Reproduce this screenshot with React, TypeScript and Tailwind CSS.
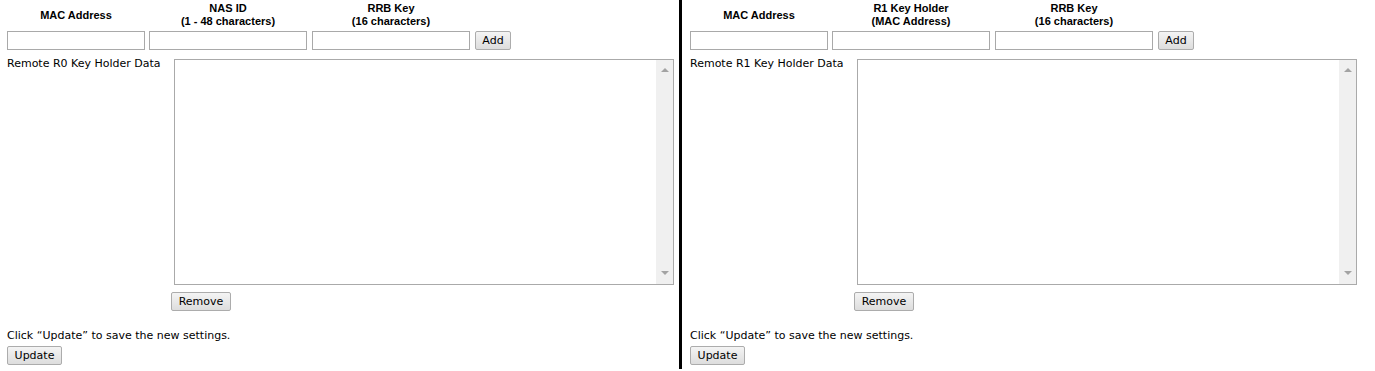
import React from "react";

const body = "font-['DejaVu_Sans',Verdana,sans-serif] text-[11px] text-black";
const head = "font-['Liberation_Sans',Arial,sans-serif] text-[11px] font-bold leading-[13px] text-black text-center";
const btn =
  "h-[19px] rounded-[2px] border border-[#acacac] bg-gradient-to-b from-[#f4f4f4] to-[#dddddd] font-['DejaVu_Sans',Verdana,sans-serif] text-[11px] leading-none text-black";
const input = "h-[19px] border border-[#a9a9a9] bg-white px-1 outline-none";

function Scrollbar() {
  return (
    <div className="flex w-[17px] flex-col items-center justify-between bg-[#f0f0f0] pt-[8px] pb-[9px]">
      <div className="h-0 w-0 border-x-[4px] border-b-[4px] border-x-transparent border-b-[#a3a3a3]" />
      <div className="h-0 w-0 border-x-[4px] border-t-[4px] border-x-transparent border-t-[#a3a3a3]" />
    </div>
  );
}

function Panel({ col2, label, right }: { col2: [string, string]; label: string; right?: boolean }) {
  return (
    <div className={right ? "flex flex-1 flex-col pl-[8px]" : "flex w-[679px] flex-col pl-[7px]"}>
      <div className="flex pt-[2px]">
        <div className={`flex h-[26px] w-[138px] items-center justify-center ${head}`}>MAC Address</div>
        <div className={`ml-[4px] flex h-[26px] w-[158px] flex-col items-center justify-center ${head}`}>
          <span>{col2[0]}</span>
          <span>{col2[1]}</span>
        </div>
        <div className={`ml-[5px] flex h-[26px] w-[158px] flex-col items-center justify-center ${head}`}>
          <span>RRB Key</span>
          <span>(16 characters)</span>
        </div>
      </div>

      <div className="mt-[3px] flex items-center">
        <input className={`w-[138px] ${input}`} />
        <input className={`ml-[4px] w-[158px] ${input}`} />
        <input className={`ml-[5px] w-[158px] ${input}`} />
        <button className={`ml-[5px] w-[36px] ${btn}`}>Add</button>
      </div>

      <div className="mt-[7px] flex">
        <div className={`w-[167px] leading-[13px] ${body}`}>{label}</div>
        <div className="mt-[2px] flex h-[226px] w-[500px] border border-[#aaaaaa] bg-white">
          <textarea className="flex-1 resize-none outline-none" />
          <Scrollbar />
        </div>
      </div>

      <div className="mt-[7px] flex pl-[164px]">
        <button className={`w-[60px] ${btn}`}>Remove</button>
      </div>

      <p className={`mt-[18px] leading-[13px] ${body}`}>Click “Update” to save the new settings.</p>
      <div className="mt-[4px] flex">
        <button className={`w-[55px] ${btn}`}>Update</button>
      </div>
    </div>
  );
}

export default function App() {
  return (
    <div className="flex h-[369px] w-[1375px] bg-white">
      <Panel col2={["NAS ID", "(1 - 48 characters)"]} label="Remote R0 Key Holder Data" />
      <div className="w-[3px] bg-black" />
      <Panel col2={["R1 Key Holder", "(MAC Address)"]} label="Remote R1 Key Holder Data" right />
    </div>
  );
}
